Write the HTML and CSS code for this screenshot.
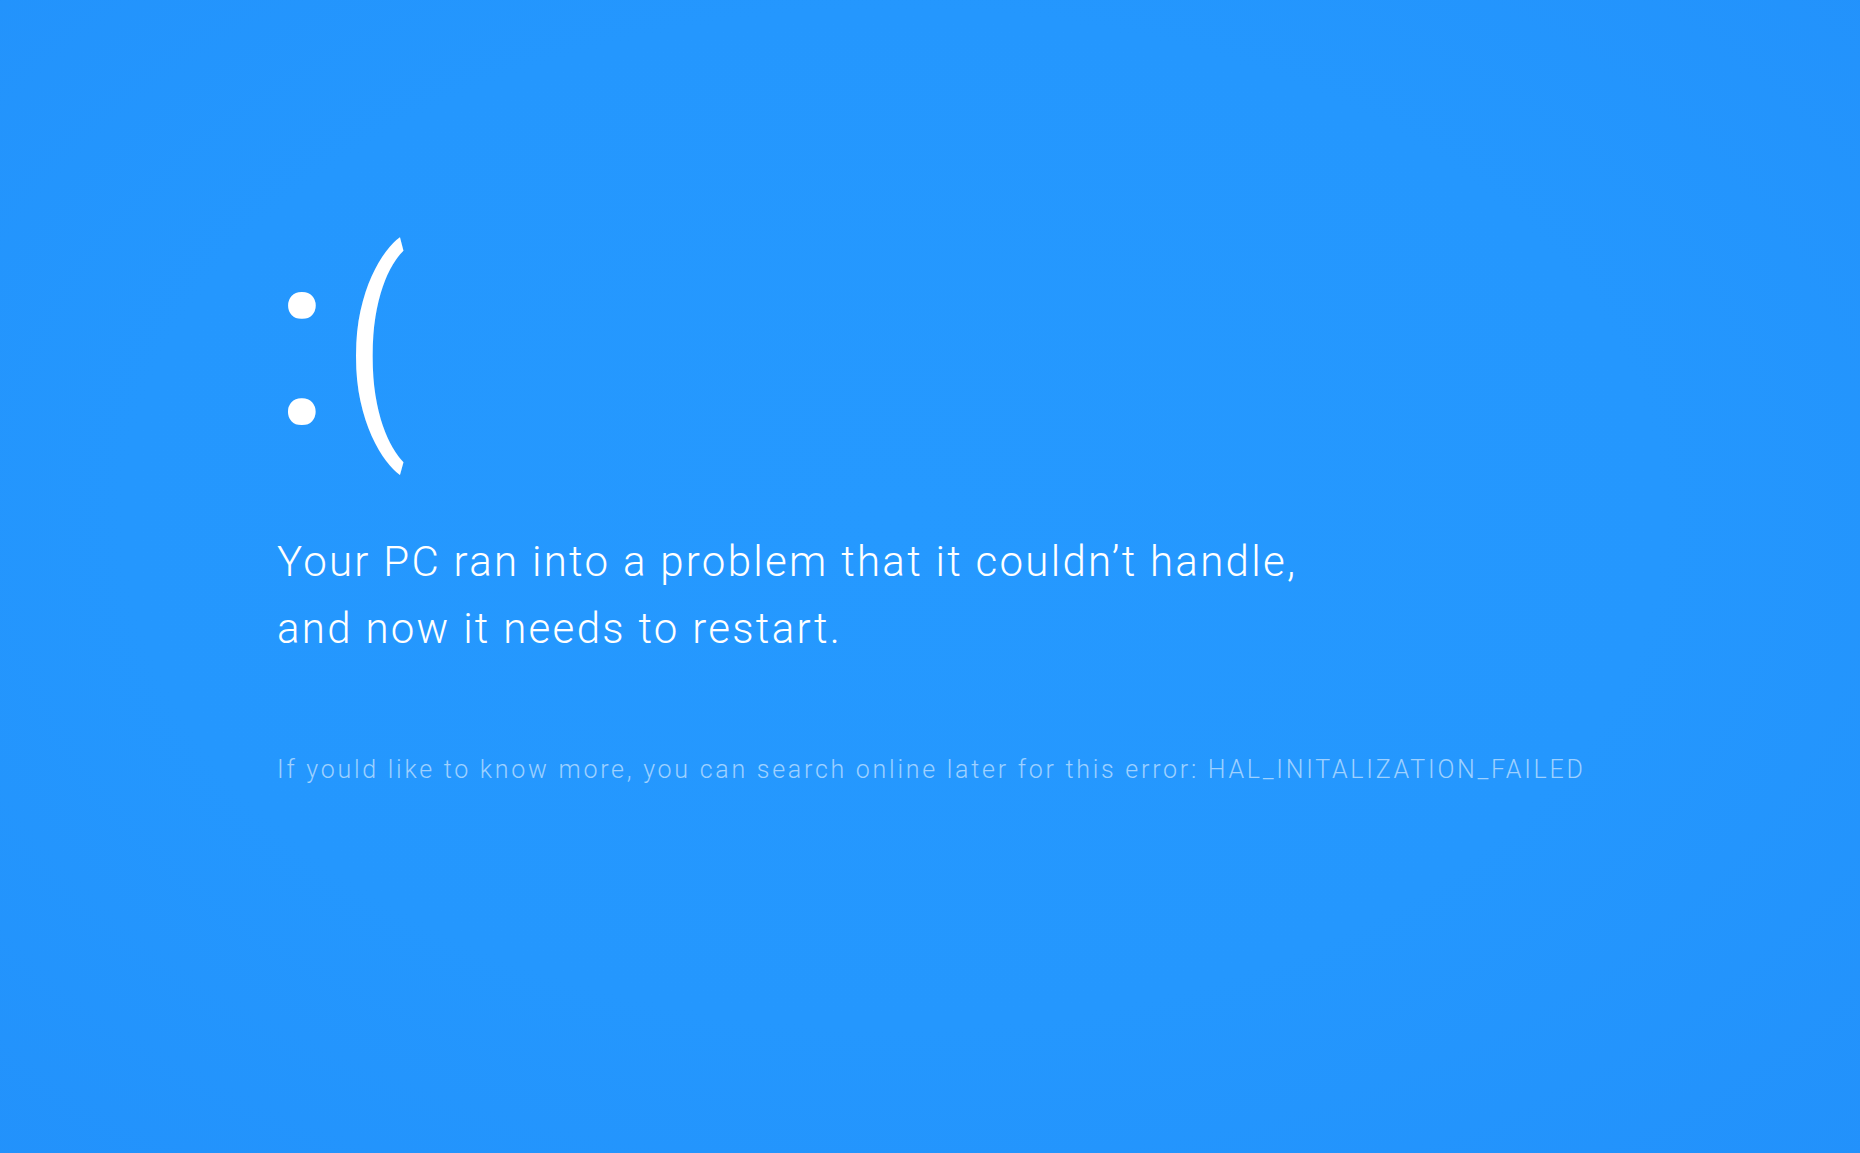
FILE: index.html
```html
<!DOCTYPE html>
<html lang="en">
<head>
<meta charset="utf-8">
<title>Your PC ran into a problem</title>
<link rel="stylesheet" href="styles.css">
</head>
<body>
<main class="screen">
  <div class="face"><span class="colon">:</span><span class="paren">(</span></div>
  <p class="message">Your PC ran into a problem that it couldn’t handle,<br>and now it needs to restart.</p>
  <p class="details">If yould like to know more, you can search online later for this error: HAL_INITALIZATION_FAILED</p>
</main>
</body>
</html>
```
FILE: styles.css
```css
html, body {
  margin: 0;
  height: 100%;
}
body {
  background: radial-gradient(ellipse 75% 80% at 48% 45%, #2599ff 0%, #2497fe 55%, #2291fb 100%);
  color: #fff;
  font-family: Roboto, "Liberation Sans", sans-serif;
  overflow: hidden;
}
.screen {
  padding: 0 0 0 277px;
}
.face {
  display: flex;
  align-items: flex-start;
  line-height: 1;
  margin-top: 217px;
  margin-left: -5px;
  height: 247px;
}
.colon {
  font-size: 246px;
  font-weight: 400;
}
.paren {
  font-size: 230px;
  font-weight: 400;
  margin-top: 12px;
  margin-left: 12px;
  transform: scaleX(0.8);
  transform-origin: left center;
}
.message {
  margin: 64px 0 0;
  font-size: 42px;
  font-weight: 300;
  line-height: 67px;
  letter-spacing: 2.3px;
  white-space: nowrap;
}
.details {
  margin: 93px 0 0;
  font-size: 25px;
  font-weight: 300;
  line-height: 30px;
  letter-spacing: 2.74px;
  color: rgba(255, 255, 255, 0.56);
  white-space: nowrap;
}
```
